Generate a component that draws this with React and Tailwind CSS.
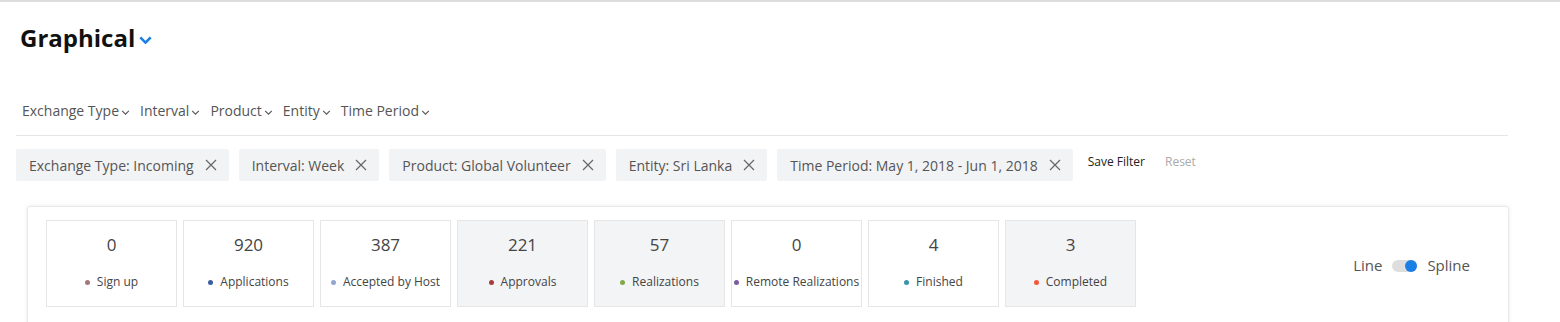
import React, { useState } from 'react'

const filters = ['Exchange Type', 'Interval', 'Product', 'Entity', 'Time Period']

const chips = [
  'Exchange Type: Incoming',
  'Interval: Week',
  'Product: Global Volunteer',
  'Entity: Sri Lanka',
  'Time Period: May 1, 2018 - Jun 1, 2018',
]

const stats = [
  { value: 0, label: 'Sign up', dot: 'bg-[#a57878]', active: false },
  { value: 920, label: 'Applications', dot: 'bg-[#3b5f9e]', active: false },
  { value: 387, label: 'Accepted by Host', dot: 'bg-[#93a6d2]', active: false },
  { value: 221, label: 'Approvals', dot: 'bg-[#a83c3c]', active: true },
  { value: 57, label: 'Realizations', dot: 'bg-[#86a84c]', active: true },
  { value: 0, label: 'Remote Realizations', dot: 'bg-[#7c5c9c]', active: false },
  { value: 4, label: 'Finished', dot: 'bg-[#3b95ad]', active: false },
  { value: 3, label: 'Completed', dot: 'bg-[#f2583b]', active: true },
]

const Chevron = ({ className }) => (
  <svg viewBox="0 0 10 6" className={className} fill="none" stroke="currentColor" strokeWidth="1.3">
    <path d="M1 1l4 4 4-4" />
  </svg>
)

const Close = () => (
  <svg viewBox="0 0 12 12" className="h-[12px] w-[12px] text-[#666]" fill="none" stroke="currentColor" strokeWidth="1.2">
    <path d="M1 1l10 10M11 1L1 11" />
  </svg>
)

export default function App() {
  const [spline, setSpline] = useState(true)

  return (
    <div className="h-[322px] overflow-hidden border-t-2 border-[#dcdcdc] bg-white font-['Open_Sans',sans-serif]">
      <div className="flex items-center pl-[20px] pt-[20px]">
        <h1 className="text-[24px] leading-[32px] font-bold text-[#111]">Graphical</h1>
        <Chevron className="ml-[4px] mt-[4px] h-[8px] w-[13px] text-[#1a7fe6] [stroke-width:2]" />
      </div>

      <div className="mx-[16px] mt-[47px] w-[1492px]">
        <div className="flex items-center gap-[10px] border-b border-[#e6e6e6] pb-[14px] pl-[6px] text-[14px] leading-[20px] text-[#555]">
          {filters.map((f) => (
            <div key={f} className="flex items-center gap-[2px]">
              <span>{f}</span>
              <Chevron className="mt-[2px] h-[5px] w-[9px] text-[#555]" />
            </div>
          ))}
        </div>

        <div className="mt-[13px] flex items-center gap-[10px]">
          {chips.map((c) => (
            <div key={c} className="flex h-[32px] items-center gap-[11px] rounded-[2px] bg-[#f2f3f5] pl-[13px] pr-[12px] text-[14px] text-[#555]">
              <span>{c}</span>
              <Close />
            </div>
          ))}
          <button className="ml-[5px] -mt-[6px] text-[12px] text-[#222]">Save Filter</button>
          <button className="ml-[10px] -mt-[6px] text-[12px] text-[#aaa]">Reset</button>
        </div>
      </div>

      <div className="mx-[27px] mt-[25px] w-[1482px] rounded-[3px] border border-[#e8e8e8] bg-white pb-[30px] pl-[18px] pr-[38px] pt-[13px] shadow-[0_0_4px_rgba(0,0,0,0.08)]">
        <div className="flex items-center">
          <div className="flex gap-[6px]">
            {stats.map((s) => (
              <div
                key={s.label}
                className={`flex h-[87px] w-[131px] flex-col items-center border border-[#e6e6e6] ${s.active ? 'bg-[#f3f4f6]' : 'bg-white'}`}
              >
                <span className="mt-[13px] text-[17px] leading-[22px] text-[#444]">{s.value}</span>
                <div className="mt-[17px] flex items-center gap-[7px] text-[12px] text-[#444]">
                  <span className={`h-[5px] w-[5px] rounded-full ${s.dot}`} />
                  <span className="whitespace-nowrap">{s.label}</span>
                </div>
              </div>
            ))}
          </div>

          <div className="ml-auto mt-[4px] flex items-center gap-[10px] text-[15px] text-[#555]">
            <span>Line</span>
            <button
              onClick={() => setSpline((p) => !p)}
              className="relative h-[12px] w-[25px] rounded-full bg-[#dedede]"
            >
              <span className={`absolute top-1/2 h-[12px] w-[12px] -translate-y-1/2 rounded-full bg-[#1a7fe6] ${spline ? 'right-0' : 'left-0'}`} />
            </button>
            <span>Spline</span>
          </div>
        </div>
      </div>
    </div>
  )
}
